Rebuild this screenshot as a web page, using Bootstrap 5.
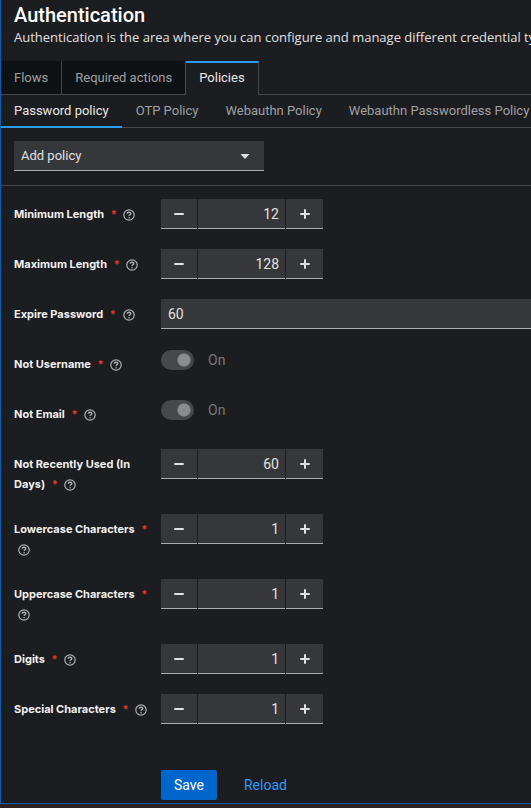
<!DOCTYPE html>
<html lang="en" data-bs-theme="dark">
<head>
<meta charset="utf-8">
<meta name="viewport" content="width=device-width, initial-scale=1">
<title>Authentication</title>
<link href="https://cdn.jsdelivr.net/npm/bootstrap@5.3.0/dist/css/bootstrap.min.css" rel="stylesheet">
<style>
body { background: #2c2321; color: #e0e0e0; font: 13px/20px Roboto, "Liberation Sans", sans-serif; overflow-x: hidden; }
.panel { background: #1c1d21; border-left: 1px solid #0060b4; border-bottom: 1px solid #0060b4; overflow: hidden; }
.page-head { padding: 4px 0 14px 13px; white-space: nowrap; }
.page-head h1 { font: 500 20px/23px Roboto, sans-serif; margin: 0; }
.page-head p { font-family: "Open Sans", sans-serif; }
.tabs-main, .tabs-sub { border-bottom: 1px solid #45474b; }
.tabs-main .nav-link, .tabs-sub .nav-link { color: #9fa0a3; white-space: nowrap; border-radius: 0; }
.tabs-main .nav-link { background: #0f1214; border: solid #45474b; border-width: 0 1px 0 0; padding: 7px 13px 6px; }
.tabs-main .nav-link.active { background: #1c1d21; color: #e8e8e8; border-top: 2px solid #2b9af3; padding-top: 5px; margin-bottom: -1px; padding-bottom: 7px; }
.tabs-sub { gap: 1px; }
.tabs-sub .nav-link { padding: 6px 13px; }
.tabs-sub .nav-link.active { color: #e8e8e8; border-bottom: 2px solid #2b9af3; padding-bottom: 5px; margin-bottom: -1px; }
.toolbar { padding: 13px 13px 14px; border-bottom: 1px solid #45474b; }
.field { background-color: #36373a; border: 0; border-bottom: 1px solid #aaabac; border-radius: 0; color: #e0e0e0; font-size: 13px; line-height: 20px; height: 30px; padding: 5px 7px 4px; min-height: 0; }
.field:focus { background-color: #36373a; color: #e0e0e0; }
select.field { width: 250px; background-image: none; appearance: none; }
.picker { width: 250px; }
.picker svg { right: 14px; top: 13px; pointer-events: none; }
.policy-form { padding: 13px 0 3px 13px; }
.policy-row { display: grid; grid-template-columns: 137px 1fr; column-gap: 10px; margin-bottom: 20px; min-height: 30px; }
.policy-name { padding-top: 5px; font: 700 11px/20px Inter, sans-serif; color: #f0f0f0; }
.req { color: #e8372c; margin: 0 0 0 4px; }
.help { border: 0; background: none; color: #b0b1b3; padding: 0 0 0 4px; line-height: 20px; display: inline-block; vertical-align: -3px; }
.help svg { display: block; }
.stepper { display: grid; grid-template-columns: 36px 87px 37px; gap: 1px; width: 162px; }
.stepper .field { width: 100%; appearance: textfield; }
.stepper input { text-align: right; font-size: 14px; padding-right: 6px; }
.stepper input::-webkit-inner-spin-button { appearance: none; margin: 0; }
.stepper button { display: grid; place-items: center; padding: 0; }
.policy-row > .form-control { font-size: 14px; }
.switch-line { padding: 0; margin: 1px 0 0; min-height: 0; height: 20px; display: flex; align-items: center; gap: 14px; font-size: 14px; }
.form-switch.switch-line .form-check-input { width: 33px; height: 20px; margin: 0; float: none; border: 0; background-color: #47484b; opacity: 1;
  background-image: radial-gradient(circle at 23px 10px, #8b8c8e 6px, transparent 7px); background-size: 100% 100%; background-position: 0 0; }
.switch-line .form-check-label, .switch-line .form-check-input:disabled ~ .form-check-label { opacity: 1; color: #77787b; }
.form-actions { margin: 46px 0 0 147px; gap: 14px; }
.form-actions .btn { font-size: 14px; line-height: 20px; padding: 5px 13px; border: 0; border-radius: 2px; }
.save { background: #06c; color: #fff; }
.reload { color: #2b9af3; }
</style>
<script src="https://cdn.jsdelivr.net/npm/bootstrap@5.3.0/dist/js/bootstrap.bundle.min.js"></script>
</head>
<body>
<svg class="d-none" aria-hidden="true">
  <symbol id="q" viewBox="0 0 12 12"><circle cx="6" cy="6" r="5.2" fill="none" stroke="currentColor" stroke-width="1.2"/><path d="M4.2 4.7C4.3 2.8 7.8 2.8 7.8 4.7C7.8 5.8 6.1 5.7 6.1 7" fill="none" stroke="currentColor" stroke-width="1.4"/><circle cx="6.1" cy="8.7" r=".8" fill="currentColor"/></symbol>
  <symbol id="minus" viewBox="0 0 10 10"><path d="M1 5H9" stroke="#e0e0e0" stroke-width="2" stroke-linecap="round"/></symbol>
  <symbol id="plus" viewBox="0 0 10 10"><path d="M1 5H9M5 1V9" stroke="#e0e0e0" stroke-width="2" stroke-linecap="round"/></symbol>
</svg>
<main class="panel">
  <header class="page-head">
    <h1>Authentication</h1>
    <p class="mb-0">Authentication is the area where you can configure and manage different credential types.</p>
  </header>
  <nav class="nav tabs-main flex-nowrap" aria-label="Authentication">
    <a class="nav-link" href="#flows">Flows</a>
    <a class="nav-link" href="#actions">Required actions</a>
    <a class="nav-link active" href="#policies">Policies</a>
  </nav>
  <nav class="nav tabs-sub flex-nowrap" aria-label="Policies">
    <a class="nav-link active" href="#password">Password policy</a>
    <a class="nav-link" href="#otp">OTP Policy</a>
    <a class="nav-link" href="#webauthn">Webauthn Policy</a>
    <a class="nav-link" href="#passwordless">Webauthn Passwordless Policy</a>
  </nav>
  <div class="toolbar">
    <div class="picker position-relative">
      <select class="form-select field" aria-label="Add policy"><option>Add policy</option></select>
      <svg class="position-absolute" width="10" height="5" viewBox="0 0 10 5" aria-hidden="true"><path d="M.5 0H9.500L5 5Z" fill="#e0e0e0"/></svg>
    </div>
  </div>
  <form class="policy-form">
    <div class="policy-row">
      <div class="policy-name"><label for="min">Minimum Length</label> <span class="req">*</span> <button class="help" type="button" aria-label="Help"><svg width="12" height="12"><use href="#q"/></svg></button></div>
      <div class="stepper"><button class="field" type="button" aria-label="Minus"><svg width="10" height="10"><use href="#minus"/></svg></button><input class="field" type="number" id="min" value="12"><button class="field" type="button" aria-label="Plus"><svg width="10" height="10"><use href="#plus"/></svg></button></div>
    </div>
    <div class="policy-row">
      <div class="policy-name"><label for="max">Maximum Length</label> <span class="req">*</span> <button class="help" type="button" aria-label="Help"><svg width="12" height="12"><use href="#q"/></svg></button></div>
      <div class="stepper"><button class="field" type="button" aria-label="Minus"><svg width="10" height="10"><use href="#minus"/></svg></button><input class="field" type="number" id="max" value="128"><button class="field" type="button" aria-label="Plus"><svg width="10" height="10"><use href="#plus"/></svg></button></div>
    </div>
    <div class="policy-row">
      <div class="policy-name"><label for="expire">Expire Password</label> <span class="req">*</span> <button class="help" type="button" aria-label="Help"><svg width="12" height="12"><use href="#q"/></svg></button></div>
      <input class="form-control field" id="expire" value="60">
    </div>
    <div class="policy-row">
      <div class="policy-name"><label for="notuser">Not Username</label> <span class="req">*</span> <button class="help" type="button" aria-label="Help"><svg width="12" height="12"><use href="#q"/></svg></button></div>
      <div class="form-check form-switch switch-line"><input class="form-check-input" type="checkbox" role="switch" id="notuser" checked disabled><label class="form-check-label" for="notuser">On</label></div>
    </div>
    <div class="policy-row">
      <div class="policy-name"><label for="notemail">Not Email</label> <span class="req">*</span> <button class="help" type="button" aria-label="Help"><svg width="12" height="12"><use href="#q"/></svg></button></div>
      <div class="form-check form-switch switch-line"><input class="form-check-input" type="checkbox" role="switch" id="notemail" checked disabled><label class="form-check-label" for="notemail">On</label></div>
    </div>
    <div class="policy-row">
      <div class="policy-name"><label class="d-inline" for="recent">Not Recently Used (In Days)</label> <span class="req">*</span> <button class="help" type="button" aria-label="Help"><svg width="12" height="12"><use href="#q"/></svg></button></div>
      <div class="stepper"><button class="field" type="button" aria-label="Minus"><svg width="10" height="10"><use href="#minus"/></svg></button><input class="field" type="number" id="recent" value="60"><button class="field" type="button" aria-label="Plus"><svg width="10" height="10"><use href="#plus"/></svg></button></div>
    </div>
    <div class="policy-row">
      <div class="policy-name"><label for="lower">Lowercase Characters</label> <span class="req">*</span> <button class="help" type="button" aria-label="Help"><svg width="12" height="12"><use href="#q"/></svg></button></div>
      <div class="stepper"><button class="field" type="button" aria-label="Minus"><svg width="10" height="10"><use href="#minus"/></svg></button><input class="field" type="number" id="lower" value="1"><button class="field" type="button" aria-label="Plus"><svg width="10" height="10"><use href="#plus"/></svg></button></div>
    </div>
    <div class="policy-row">
      <div class="policy-name"><label for="upper">Uppercase Characters</label> <span class="req">*</span> <button class="help" type="button" aria-label="Help"><svg width="12" height="12"><use href="#q"/></svg></button></div>
      <div class="stepper"><button class="field" type="button" aria-label="Minus"><svg width="10" height="10"><use href="#minus"/></svg></button><input class="field" type="number" id="upper" value="1"><button class="field" type="button" aria-label="Plus"><svg width="10" height="10"><use href="#plus"/></svg></button></div>
    </div>
    <div class="policy-row">
      <div class="policy-name"><label for="digits">Digits</label> <span class="req">*</span> <button class="help" type="button" aria-label="Help"><svg width="12" height="12"><use href="#q"/></svg></button></div>
      <div class="stepper"><button class="field" type="button" aria-label="Minus"><svg width="10" height="10"><use href="#minus"/></svg></button><input class="field" type="number" id="digits" value="1"><button class="field" type="button" aria-label="Plus"><svg width="10" height="10"><use href="#plus"/></svg></button></div>
    </div>
    <div class="policy-row">
      <div class="policy-name"><label for="special">Special Characters</label> <span class="req">*</span> <button class="help" type="button" aria-label="Help"><svg width="12" height="12"><use href="#q"/></svg></button></div>
      <div class="stepper"><button class="field" type="button" aria-label="Minus"><svg width="10" height="10"><use href="#minus"/></svg></button><input class="field" type="number" id="special" value="1"><button class="field" type="button" aria-label="Plus"><svg width="10" height="10"><use href="#plus"/></svg></button></div>
    </div>
    <div class="form-actions d-flex">
      <button class="btn save" type="submit">Save</button>
      <button class="btn reload" type="button">Reload</button>
    </div>
  </form>
</main>
</body>
</html>
